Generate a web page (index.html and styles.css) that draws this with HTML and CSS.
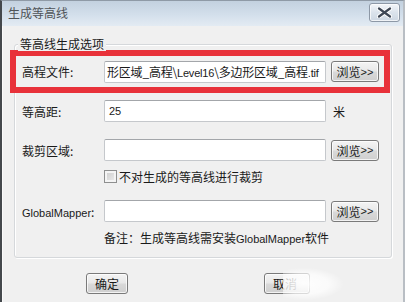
FILE: index.html
```html
<!DOCTYPE html>
<html lang="zh-CN">
<head>
<meta charset="utf-8">
<title>生成等高线</title>
<link rel="stylesheet" href="styles.css">
</head>
<body>
<div class="window">
  <div class="titlebar">
    <span class="title">生成等高线</span>
    <button class="close" type="button" aria-label="关闭">
      <svg width="15" height="11" viewBox="0 0 15 11">
        <path d="M2 1.5 L13 9.5 M13 1.5 L2 9.5" stroke="#ffffff" stroke-width="4.2" stroke-linecap="round"/>
        <path d="M2 1.5 L13 9.5 M13 1.5 L2 9.5" stroke="#3d4654" stroke-width="2.2" stroke-linecap="round"/>
      </svg>
    </button>
  </div>
  <div class="body">
    <div class="group">
      <span class="legend">等高线生成选项</span>
      <div class="row highlight">
        <span class="label">高程文件:</span>
        <div class="input path"><span class="path-text">形区域_高程\<span class="lat">Level16</span>\多边形区域_高程<span class="lat">.tif</span></span></div>
        <button class="btn browse" type="button">浏览<span class="lat">&gt;&gt;</span></button>
      </div>
      <div class="row r2">
        <span class="label">等高距:</span>
        <div class="input"><span class="lat">25</span></div>
        <span class="unit">米</span>
      </div>
      <div class="row r3">
        <span class="label">裁剪区域:</span>
        <div class="input"></div>
        <button class="btn browse" type="button">浏览<span class="lat">&gt;&gt;</span></button>
      </div>
      <div class="check-row">
        <span class="checkbox"></span>
        <span class="check-label">不对生成的等高线进行裁剪</span>
      </div>
      <div class="row r4">
        <span class="label"><span class="lat">GlobalMapper</span>:</span>
        <div class="input"></div>
        <button class="btn browse" type="button">浏览<span class="lat">&gt;&gt;</span></button>
      </div>
      <div class="note">备注：生成等高线需安装<span class="lat">GlobalMapper</span>软件</div>
    </div>
    <div class="actions">
      <button class="btn ok" type="button">确定</button>
      <button class="btn cancel" type="button">取消<span class="watermark"></span></button>
    </div>
  </div>
</div>
</body>
</html>
```
FILE: styles.css
```css
html, body {
  margin: 0;
  padding: 0;
}
body {
  width: 405px;
  height: 302px;
  overflow: hidden;
  background: #f0f0f0;
  font-family: "Noto Sans CJK SC", "Liberation Sans", sans-serif;
  font-size: 12px;
  color: #1a1a1a;
}
.window {
  box-sizing: border-box;
  width: 405px;
  height: 302px;
  border-left: 2px solid #44484c;
  border-right: 2px solid #b9bec4;
  border-top: 1px solid #8f9aa6;
  background: #f0f0f0;
  display: flex;
  flex-direction: column;
}
.titlebar {
  height: 25px;
  flex: none;
  display: flex;
  align-items: flex-start;
  justify-content: space-between;
  padding-left: 6px;
  background: linear-gradient(#c3d1df, #d3dfeb 55%, #e3ebf3);
}
.title {
  line-height: 24px;
  font-size: 12px;
  color: #4f5357;
}
.close {
  margin: 2px 3px 0 0;
  width: 31px;
  height: 19px;
  padding: 0;
  border: 1px solid #8d98a6;
  border-radius: 3px;
  background: linear-gradient(#f3f6f9, #dbe3ec 50%, #cdd7e2);
  display: flex;
  align-items: center;
  justify-content: center;
  box-shadow: inset 0 0 0 1px rgba(255,255,255,0.7);
}
.close svg { display: block; }
.body {
  flex: 1;
  display: flex;
  flex-direction: column;
  border-left: 1px solid #fafafa;
}
.group {
  position: relative;
  box-sizing: border-box;
  margin: 18px 0 0 11px;
  width: 378px;
  height: 214px;
  border: 1px solid #d5d8db;
  border-radius: 3px;
  box-shadow: inset 1px 1px 0 #ffffff, 1px 1px 0 #ffffff;
  padding: 5px 0 0 7px;
}
.legend {
  position: absolute;
  top: -8px;
  left: 3px;
  padding: 0 2px;
  line-height: 14px;
  background: #f0f0f0;
  color: #1a1a1a;
}
.lat {
  font-family: "Liberation Sans", sans-serif;
  font-size: 11px;
}
.row {
  display: flex;
  align-items: center;
  height: 22px;
}
.label {
  width: 82px;
  flex: none;
  white-space: nowrap;
}
.highlight {
  box-sizing: border-box;
  margin-left: -12px;
  width: 380px;
  height: 43px;
  border: 6px solid #e8323a;
  padding-left: 6px;
}
.input {
  box-sizing: border-box;
  width: 222px;
  height: 22px;
  flex: none;
  background: #ffffff;
  border: 1px solid #c5c8cc;
  border-top-color: #a3a6aa;
  border-radius: 2px;
  display: flex;
  align-items: center;
  padding-left: 4px;
  overflow: hidden;
  white-space: nowrap;
}
.path {
  padding-left: 2px;
  letter-spacing: -0.2px;
}
.btn {
  box-sizing: border-box;
  height: 21px;
  padding: 0;
  border: 1px solid #7a7a7a;
  border-radius: 3px;
  background: linear-gradient(#f4f4f4, #e8e8e8 48%, #d9d9d9 52%, #cfcfcf);
  box-shadow: inset 0 0 0 1px rgba(255,255,255,0.75);
  font-family: "Noto Sans CJK SC", sans-serif;
  font-size: 12px;
  color: #1a1a1a;
  display: flex;
  align-items: center;
  justify-content: center;
}
.browse {
  width: 48px;
  margin-left: 5px;
}
.r2 { margin-top: 7px; }
.unit { margin-left: 7px; }
.r3 { margin-top: 17px; }
.check-row {
  display: flex;
  align-items: center;
  height: 14px;
  margin-top: 8px;
  padding-left: 82px;
}
.checkbox {
  box-sizing: border-box;
  width: 13px;
  height: 13px;
  border: 1px solid #8e8f8f;
  background: linear-gradient(135deg, #cbcbcb, #eeeeee);
  box-shadow: inset 0 0 0 2px #f4f4f4;
}
.check-label { margin-left: 2px; }
.r4 { margin-top: 17px; }
.note {
  margin-top: 8px;
  padding-left: 82px;
  line-height: 16px;
  white-space: nowrap;
}
.actions {
  display: flex;
  margin-top: 15px;
  padding-left: 83px;
}
.ok { width: 42px; }
.cancel {
  position: relative;
  width: 46px;
  margin-left: 136px;
  justify-content: flex-start;
  padding-left: 8px;
}
.watermark {
  position: absolute;
  left: 18px;
  top: -6px;
  width: 60px;
  height: 32px;
  background: radial-gradient(ellipse at 35% 50%, rgba(255,255,255,0.95), rgba(255,255,255,0.7) 45%, rgba(255,255,255,0) 72%);
}
```
